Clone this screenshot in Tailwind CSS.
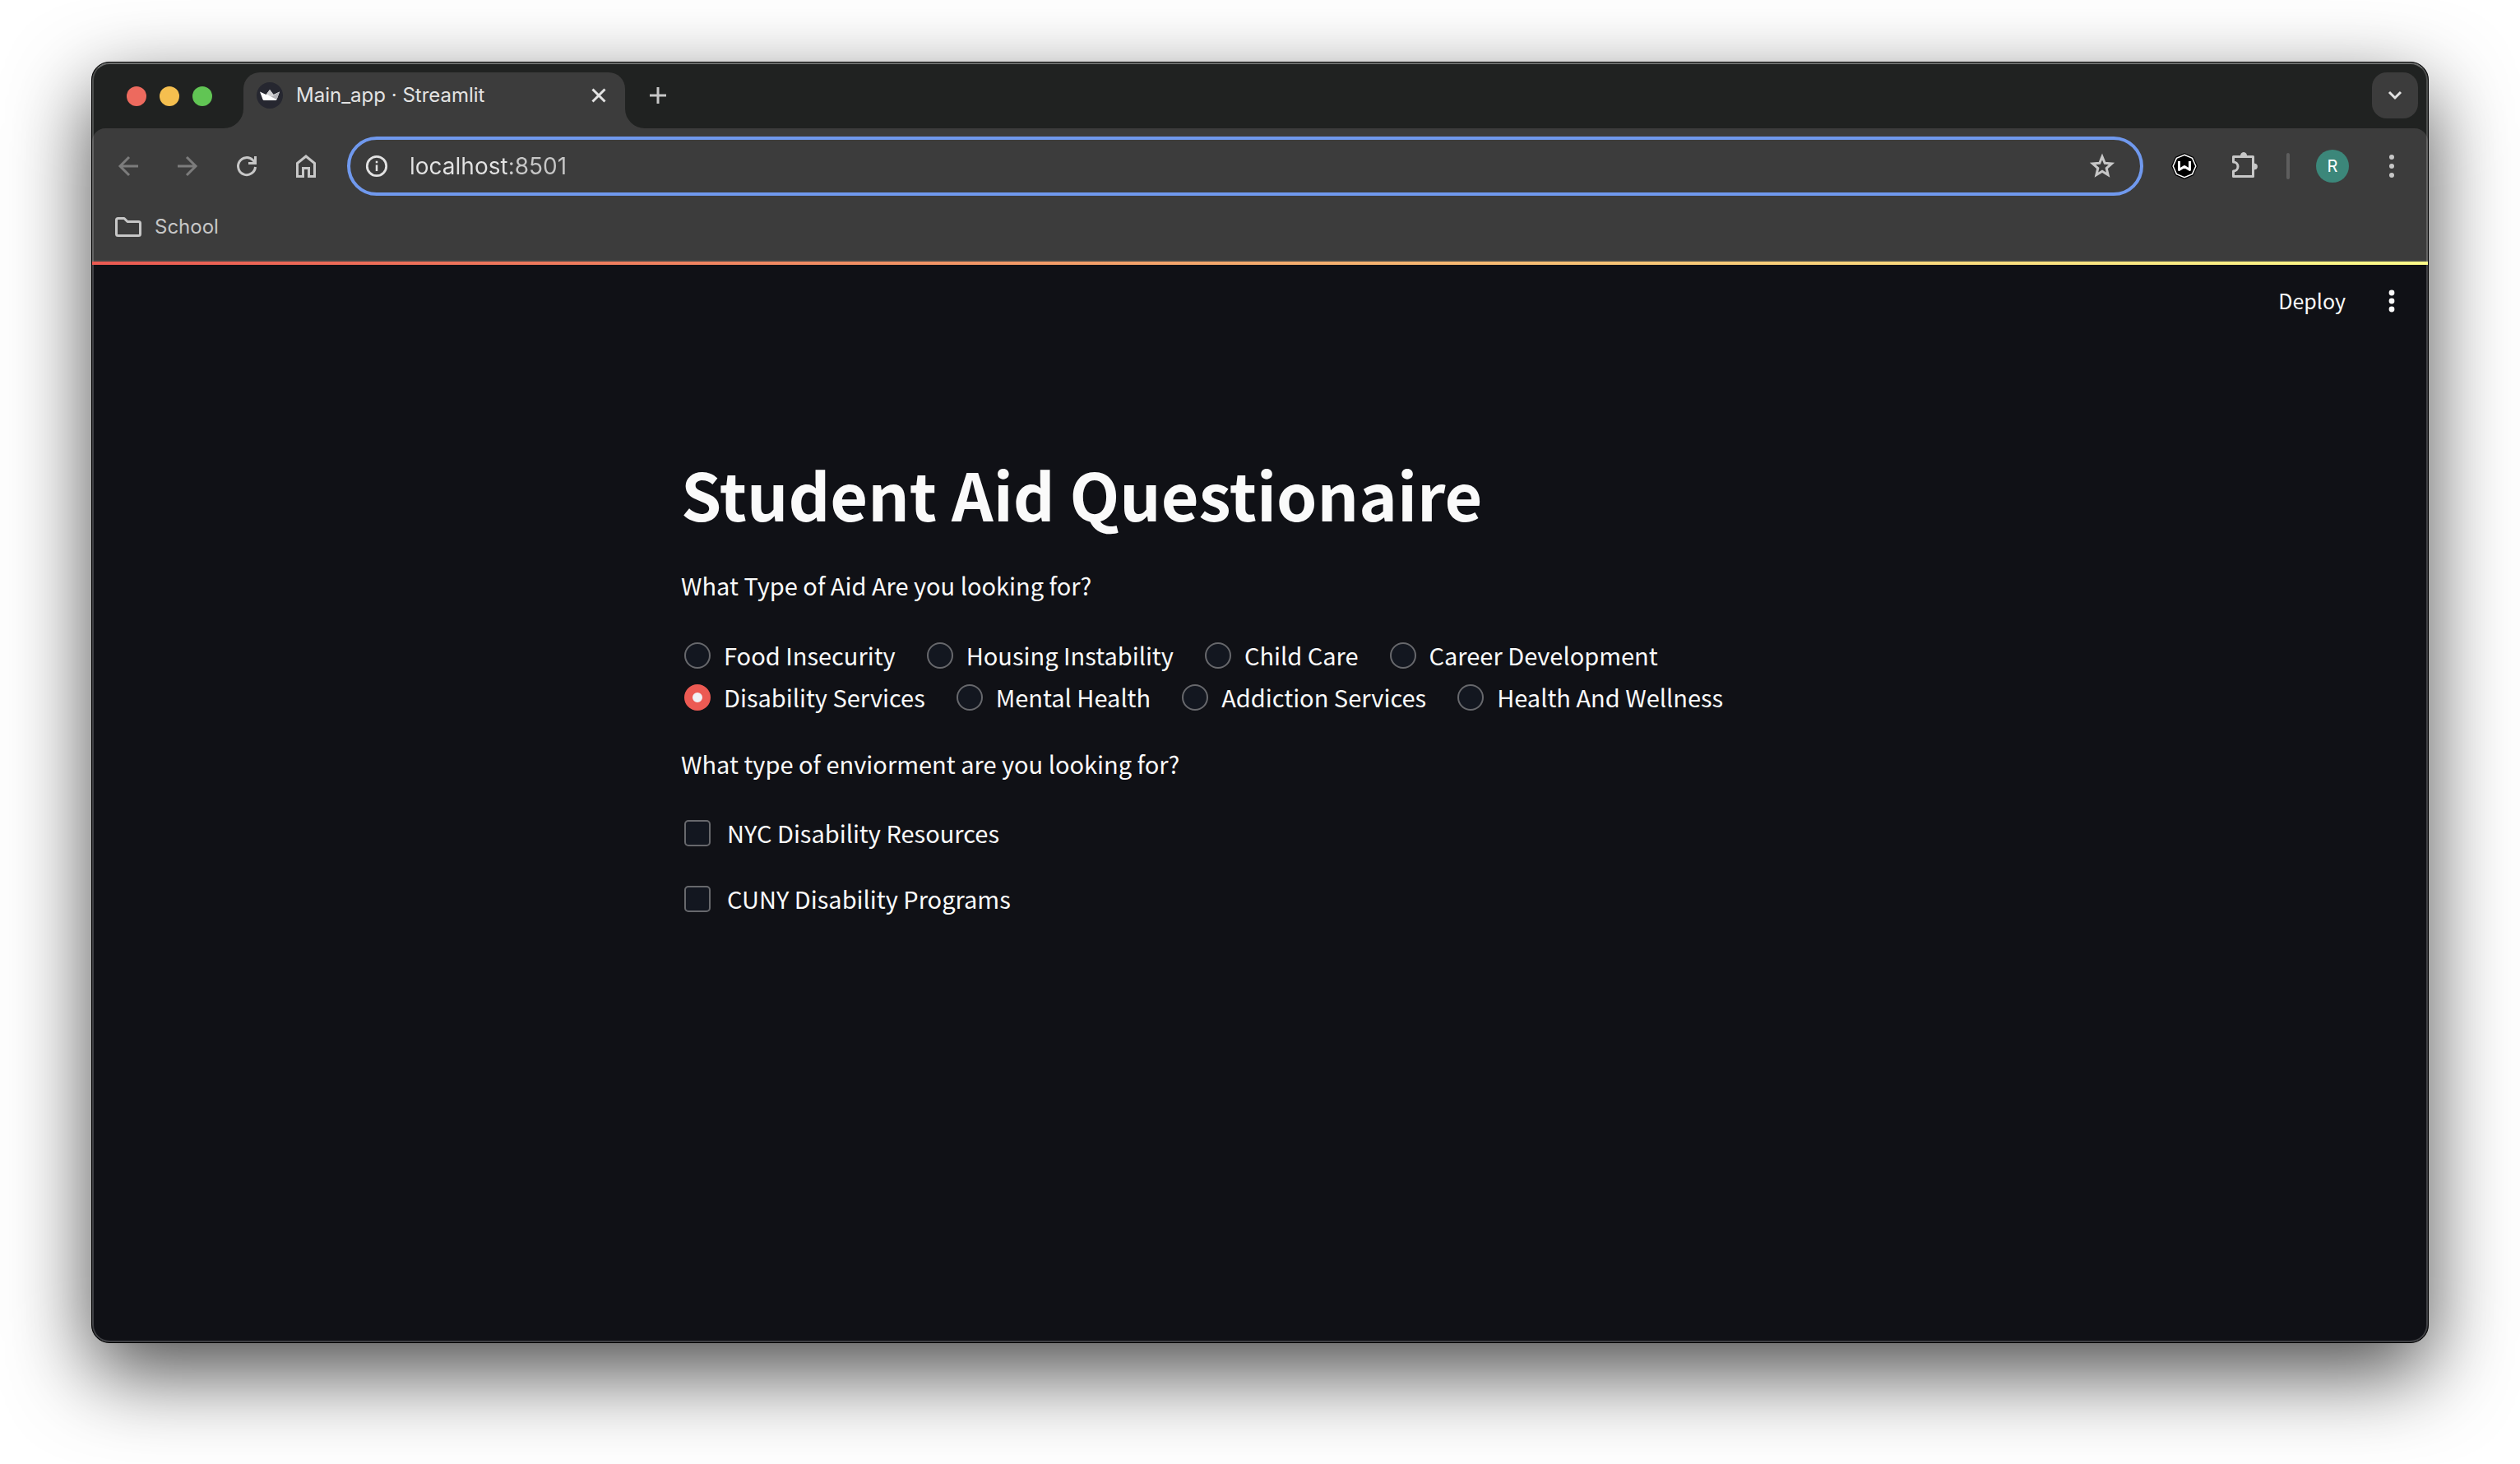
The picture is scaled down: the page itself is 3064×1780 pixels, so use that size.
<!DOCTYPE html>
<html lang="en">
<head>
<meta charset="utf-8">
<title>Main_app · Streamlit</title>
<script src="https://cdn.jsdelivr.net/npm/@tailwindcss/browser@4"></script>
</head>
<body class="min-h-screen bg-white px-[111px] pt-[75px] pb-[147px] font-['Inter',sans-serif] flex flex-col">
<div class="relative grow flex flex-col overflow-hidden rounded-[22px] border border-black bg-[#101116] shadow-[0_36px_100px_rgba(0,0,0,0.7)]">
  <div class="pointer-events-none absolute inset-0 z-10 rounded-[21px] border-2 border-t-white/35 border-x-white/20 border-b-white/20"></div>

  <!-- Tab strip -->
  <div class="bg-[#202221]">
    <div class="flex h-20 items-end pr-3">
      <div class="flex h-20 items-center gap-4 pl-[42px] pt-[2px] pr-[14px]">
        <button aria-label="Close window" class="size-6 rounded-full bg-[#ed6a5e]"></button>
        <button aria-label="Minimize window" class="size-6 rounded-full bg-[#f5bf4f]"></button>
        <button aria-label="Zoom window" class="size-6 rounded-full bg-[#61c554]"></button>
      </div>
      <svg class="size-6 text-[#3c3c3c]" viewBox="0 0 24 24" fill="currentColor"><path d="M24 0V24H0A24 24 0 0 0 24 0Z"/></svg>
      <div class="flex h-[68px] w-[464px] items-center rounded-t-[20px] bg-[#3c3c3c] pb-3 pl-4 pr-5">
        <svg class="size-8" viewBox="0 0 32 32"><circle cx="16" cy="16" r="16" fill="#262730"/><path d="M4 11.500l7.500 3.500L16 9l4.500 6L28 11.500l-3.500 9.500q-.4 1-1.500 1H9q-1 0-1.500-1z" fill="#fff"/><path d="M16 9l4.500 6-3 2.500L12 14.500z" fill="#d0d0d2"/><path d="M28 11.500L24.500 21 17.500 17.500z" fill="#b4b4b8"/></svg>
        <span class="pl-4 text-2xl text-[#e3e3e3]">Main_app · Streamlit</span>
        <button aria-label="Close tab" class="ml-auto text-[#e3e3e3]"><svg class="size-6" viewBox="0 0 24 24" fill="none" stroke="currentColor" stroke-width="3"><path d="M4.500 4.500l15 15M19.500 4.500l-15 15"/></svg></button>
      </div>
      <svg class="size-6 text-[#3c3c3c]" viewBox="0 0 24 24" fill="currentColor"><path d="M0 0V24H24A24 24 0 0 1 0 0Z"/></svg>
      <button aria-label="New tab" class="mb-7 ml-1 text-[#c7c7c7]"><svg class="size-6" viewBox="0 0 24 24" fill="none" stroke="currentColor" stroke-width="3"><path d="M12 2v20M2 12h20"/></svg></button>
      <button aria-label="Search tabs" class="mb-3 ml-auto flex size-14 items-center justify-center rounded-[18px] bg-[#3c3c3c] text-[#e3e3e3]"><svg class="size-6" viewBox="0 0 24 24" fill="none" stroke="currentColor" stroke-width="3"><path d="M5 8l7 7 7-7"/></svg></button>
    </div>
    <div class="rounded-t-[16px] border-b-2 border-[#454746] bg-[#3c3c3c]">
      <!-- Toolbar -->
      <div class="flex items-center pt-[10px] pl-7 pr-7">
        <div class="flex items-center gap-10 text-[#c7c7c7]">
          <button aria-label="Back" class="text-[#7c7c7c]"><svg class="size-8" viewBox="0 0 32 32" fill="none" stroke="currentColor" stroke-width="3"><path d="M28 16H6M17 5L6 16l11 11"/></svg></button>
          <button aria-label="Forward" class="text-[#7c7c7c]"><svg class="size-8" viewBox="0 0 32 32" fill="none" stroke="currentColor" stroke-width="3"><path d="M4 16h22M15 5l11 11-11 11"/></svg></button>
          <button aria-label="Reload"><svg class="size-8" viewBox="0 0 32 32" fill="none" stroke="currentColor" stroke-width="3"><path d="M26.500 17A10.500 10.500 0 1 1 23.500 8.700L26 11.500"/><path d="M26.500 4v8.500H18"/></svg></button>
          <button aria-label="Home"><svg class="size-8" viewBox="0 0 32 32" fill="none" stroke="currentColor" stroke-width="3"><path d="M5.500 28.500V12.500L16 4l10.500 8.500v16H19.500V18.500h-7v10z"/></svg></button>
        </div>
        <div class="ml-[34px] flex h-[72px] grow items-center rounded-full border-4 border-[#7099ee] pl-[18px] pr-[30px]">
          <svg class="size-7 text-[#e3e3e3]" viewBox="0 0 28 28" fill="none" stroke="currentColor"><circle cx="14" cy="14" r="11.700" stroke-width="2.800"/><path d="M14 12.500V20M14 7.800v2.400" stroke-width="2.500"/></svg>
          <input type="text" aria-label="Address" value="localhost:8501" class="ml-[26px] h-10 min-w-0 grow bg-linear-to-r from-[#e3e3e3] from-[118px] to-[#c7c7c7] to-[118px] bg-clip-text text-[28px] leading-10 text-transparent">
          <button aria-label="Bookmark this tab" class="text-[#c7c7c7]"><svg class="size-8" viewBox="0 0 32 32" fill="none" stroke="currentColor" stroke-width="3"><path d="M16 4.500l3.200 7.800 8.300.7-6.300 5.500 1.900 8.200L16 22.300l-7.100 4.400 1.900-8.200L4.500 13l8.300-.7z"/></svg></button>
        </div>
        <button aria-label="Extension W" class="ml-[34px]"><svg class="size-8" viewBox="0 0 32 32" fill="none"><path d="M16 0l11 4.700L32 16l-5 11.300L16 32 5 27.300 0 16 5 4.700z" fill="#000"/><path d="M16 2.200l9.600 4.200L29.800 16l-4.200 9.600L16 29.800l-9.600-4.200L2.200 16l4.200-9.600z" stroke="#fff" stroke-width="1.500"/><path d="M9.500 10v10.500l6.500-4 6.500 4V10" stroke="#fff" stroke-width="3" stroke-linejoin="round"/></svg></button>
        <button aria-label="Extensions" class="ml-[38px] text-[#c7c7c7]"><svg class="size-9" viewBox="0 0 36 36" fill="none" stroke="currentColor" stroke-width="3"><path d="M5.500 6.500h24v24h-24v-6.500a5 5 0 0 0 0-11z" stroke-linejoin="round"/><path d="M14.500 5a3.500 3.500 0 0 1 7 0zM31 15a3.500 3.500 0 0 1 0 7z" fill="currentColor" stroke-width="1"/></svg></button>
        <div class="ml-[34px] h-8 w-1 rounded-full bg-[#5e5e5e]"></div>
        <button aria-label="Profile R" class="ml-8 size-10 rounded-full bg-[#3c877a] text-[20px] leading-10 text-white">R</button>
        <button aria-label="Chrome menu" class="ml-9 text-[#c7c7c7]"><svg class="size-8" viewBox="0 0 32 32" fill="currentColor"><circle cx="16" cy="5" r="3"/><circle cx="16" cy="16" r="3"/><circle cx="16" cy="27" r="3"/></svg></button>
      </div>
      <!-- Bookmarks -->
      <div class="flex h-[78px] items-center pl-7 pb-[2px]">
        <a href="#" class="flex items-center gap-4 text-2xl text-[#c7c7c7]"><svg class="h-6 w-8" viewBox="0 0 32 24" fill="none" stroke="currentColor" stroke-width="3" stroke-linejoin="round"><path d="M3.500 1.500H11l4 4H28.500q2 0 2 2V20.500q0 2-2 2h-25q-2 0-2-2v-17q0-2 2-2z"/></svg>School</a>
      </div>
    </div>
  </div>

  <!-- Streamlit app -->
  <div class="relative z-20 h-1 bg-linear-to-r/srgb from-[#eb5a52] to-[#fffd8a]"></div>
  <div class="grow font-['Noto_Sans_CJK_SC',sans-serif] text-[29px] leading-[51px] text-[#fafafa]">
    <header class="flex items-center justify-end pt-[18px] pr-7">
      <button class="text-[25px] leading-[51px]">Deploy</button>
      <button aria-label="Main menu" class="ml-10"><svg class="size-8" viewBox="0 0 32 32" fill="currentColor"><circle cx="16" cy="6" r="3.400"/><circle cx="16" cy="16" r="3.400"/><circle cx="16" cy="26" r="3.400"/></svg></button>
    </header>
    <main class="mx-auto w-[1408px] max-w-full pt-[156px]">
      <h1 class="text-[79px] leading-[106px] font-bold">Student Aid Questionaire</h1>
      <p class="pt-[33px]">What Type of Aid Are you looking for?</p>
      <fieldset aria-label="Type of aid" class="pt-[34px]">
        <div class="flex flex-wrap gap-x-[38px] pl-1">
          <label class="flex items-center gap-4"><input type="radio" name="aid" class="size-8 appearance-none rounded-full border-2 border-[#67686c] bg-[#131720] checked:border-[10px] checked:border-[#ec5a53] checked:bg-[#f0f2f6]">Food Insecurity</label>
          <label class="flex items-center gap-4"><input type="radio" name="aid" class="size-8 appearance-none rounded-full border-2 border-[#67686c] bg-[#131720] checked:border-[10px] checked:border-[#ec5a53] checked:bg-[#f0f2f6]">Housing Instability</label>
          <label class="flex items-center gap-4"><input type="radio" name="aid" class="size-8 appearance-none rounded-full border-2 border-[#67686c] bg-[#131720] checked:border-[10px] checked:border-[#ec5a53] checked:bg-[#f0f2f6]">Child Care</label>
          <label class="flex items-center gap-4"><input type="radio" name="aid" class="size-8 appearance-none rounded-full border-2 border-[#67686c] bg-[#131720] checked:border-[10px] checked:border-[#ec5a53] checked:bg-[#f0f2f6]">Career Development</label>
          <label class="flex items-center gap-4"><input type="radio" name="aid" checked class="size-8 appearance-none rounded-full border-2 border-[#67686c] bg-[#131720] checked:border-[10px] checked:border-[#ec5a53] checked:bg-[#f0f2f6]">Disability Services</label>
          <label class="flex items-center gap-4"><input type="radio" name="aid" class="size-8 appearance-none rounded-full border-2 border-[#67686c] bg-[#131720] checked:border-[10px] checked:border-[#ec5a53] checked:bg-[#f0f2f6]">Mental Health</label>
          <label class="flex items-center gap-4"><input type="radio" name="aid" class="size-8 appearance-none rounded-full border-2 border-[#67686c] bg-[#131720] checked:border-[10px] checked:border-[#ec5a53] checked:bg-[#f0f2f6]">Addiction Services</label>
          <label class="flex items-center gap-4"><input type="radio" name="aid" class="size-8 appearance-none rounded-full border-2 border-[#67686c] bg-[#131720] checked:border-[10px] checked:border-[#ec5a53] checked:bg-[#f0f2f6]">Health And Wellness</label>
        </div>
      </fieldset>
      <p class="pt-[30px]">What type of enviorment are you looking for?</p>
      <div class="flex flex-col gap-[29px] pt-[33px] pl-1">
        <label class="flex items-center gap-5"><input type="checkbox" class="size-8 appearance-none rounded-[5px] border-2 border-[#67686c] bg-[#131720] checked:bg-[#ec5a53]">NYC Disability Resources</label>
        <label class="flex items-center gap-5"><input type="checkbox" class="size-8 appearance-none rounded-[5px] border-2 border-[#67686c] bg-[#131720] checked:bg-[#ec5a53]">CUNY Disability Programs</label>
      </div>
    </main>
  </div>
</div>
</body>
</html>
